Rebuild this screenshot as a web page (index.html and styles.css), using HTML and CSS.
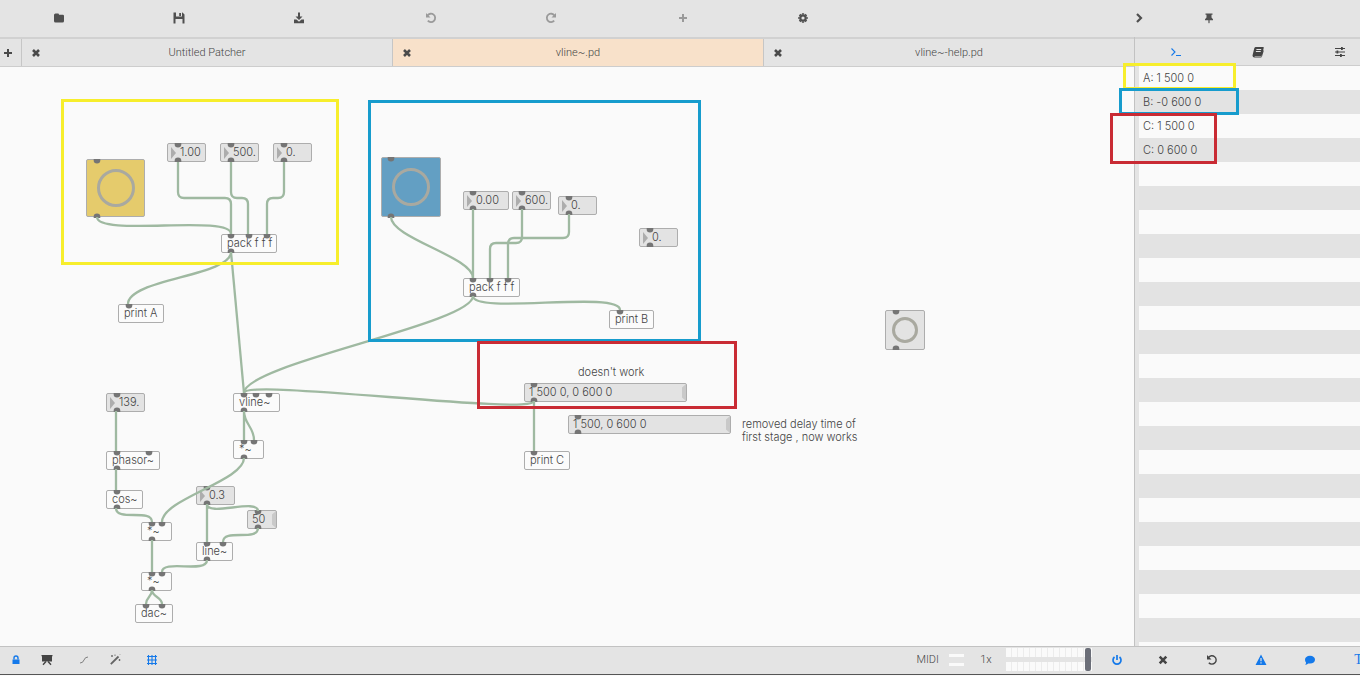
FILE: index.html
```html
<!DOCTYPE html>
<html lang="en">
<head>
<meta charset="utf-8">
<title>vline~.pd</title>
<link rel="stylesheet" href="styles.css">
</head>
<body>
<div class="app">
  <header class="toolbar">
    <div class="tool-group">
      <button class="tool" aria-label="Open"><svg viewBox="0 0 14 14"><path d="M2 4q0-1.500 1.500-1.500h2.500q1 0 1 1.200h3.800q1.200 0 1.200 1.200v5.100q0 1.500-1.500 1.500h-7q-1.500 0-1.500-1.500z"/></svg></button>
      <button class="tool" aria-label="Save"><svg viewBox="0 0 14 14"><path fill-rule="evenodd" d="M1.500 1.500h9l2 2v9h-11zM4 1.500v4h6v-4zM3.500 8v4.500h7V8z"/><path d="M7.200 2h1.800v3H7.200z"/></svg></button>
      <button class="tool" aria-label="Save as"><svg viewBox="0 0 14 14"><path d="M6 1.500h2v4h2.500L7 9 3.500 5.500H6z"/><path d="M2 8.500h2.500L7 10.800 9.500 8.500H12v3.700H2z"/></svg></button>
    </div>
    <div class="tool-group">
      <button class="tool" aria-label="Undo" disabled><svg viewBox="0 0 14 14"><path class="stroke" d="M3.500 4.500a4.200 4.200 0 1 1 .3 5.200"/><path d="M2 2v4.500h4.500z"/></svg></button>
      <button class="tool" aria-label="Redo" disabled><svg viewBox="0 0 14 14"><path class="stroke" d="M10.500 4.500a4.200 4.200 0 1 0-.3 5.200"/><path d="M12 2v4.500H7.500z"/></svg></button>
    </div>
    <div class="tool-group">
      <button class="tool" aria-label="Add object" disabled><svg viewBox="0 0 14 14"><path d="M6 3h2v3h3v2H8v3H6V8H3V6h3z"/></svg></button>
      <button class="tool" aria-label="Settings"><svg viewBox="0 0 14 14"><circle class="cog" cx="7" cy="7" r="2.700"/><path class="cog" d="M7 2.300v1.200M7 10.500v1.200M2.300 7h1.200M10.500 7h1.200M3.600 3.600l.9.900M9.500 9.500l.9.900M3.600 10.400l.9-.9M9.500 4.500l.9-.9"/></svg></button>
    </div>
    <div class="tool-group window-tools">
      <button class="tool narrow" aria-label="Hide sidebar"><svg viewBox="0 0 14 14"><path class="thick" d="M5 3l4 4-4 4"/></svg></button>
      <button class="tool narrow" aria-label="Pin sidebar"><svg viewBox="0 0 14 14"><path d="M3.500 2.500h7v1.300H9.500V6.500l1.500 1.700v1H7.600v2.500l-.6.800-.6-.8V9.200H3v-1L4.500 6.500V3.800h-1z"/></svg></button>
    </div>
  </header>

  <div class="workspace">
    <main class="editor">
      <nav class="tabs">
        <button class="new-tab" aria-label="New tab"><svg viewBox="0 0 14 14"><path d="M6 3h2v3h3v2H8v3H6V8H3V6h3z"/></svg></button>
        <div class="tab"><button class="close" aria-label="Close Untitled Patcher"><svg viewBox="0 0 14 14"><path class="cross" d="M4 4l6 6M10 4l-6 6"/></svg></button><button class="tab-name">Untitled Patcher</button></div>
        <div class="tab active"><button class="close" aria-label="Close vline~.pd"><svg viewBox="0 0 14 14"><path class="cross" d="M4 4l6 6M10 4l-6 6"/></svg></button><button class="tab-name">vline~.pd</button></div>
        <div class="tab"><button class="close" aria-label="Close vline~-help.pd"><svg viewBox="0 0 14 14"><path class="cross" d="M4 4l6 6M10 4l-6 6"/></svg></button><button class="tab-name">vline~-help.pd</button></div>
      </nav>

      <section class="canvas" aria-label="Patch">
        <button class="node bang bang-a" aria-label="Bang A"><span class="ring"></span></button>
        <label class="node number num-a1"><input aria-label="Level A" value="1.00"></label>
        <label class="node number num-a2"><input aria-label="Time A" value="500."></label>
        <label class="node number num-a3"><input aria-label="Delay A" value="0."></label>
        <div class="node object pack-a">pack f f f</div>
        <div class="node object print-a">print A</div>

        <button class="node bang bang-b" aria-label="Bang B"><span class="ring"></span></button>
        <label class="node number num-b1"><input aria-label="Level B" value="0.00"></label>
        <label class="node number num-b2"><input aria-label="Time B" value="600."></label>
        <label class="node number num-b3"><input aria-label="Delay B" value="0."></label>
        <label class="node number num-b4"><input aria-label="Spare number" value="0."></label>
        <div class="node object pack-b">pack f f f</div>
        <div class="node object print-b">print B</div>

        <label class="node number num-freq"><input aria-label="Frequency" value="139."></label>
        <div class="node object phasor">phasor~</div>
        <div class="node object cos">cos~</div>
        <div class="node object mul-1">*~</div>
        <div class="node object mul-2">*~</div>
        <div class="node object dac">dac~</div>
        <div class="node object vline">vline~</div>
        <div class="node object mul-3">*~</div>
        <label class="node number num-gain"><input aria-label="Gain" value="0.3"></label>
        <button class="node message msg-50">50</button>
        <div class="node object line">line~</div>

        <p class="comment comment-1">doesn't work</p>
        <button class="node message msg-1">1 500 0, 0 600 0</button>
        <button class="node message msg-2">1 500, 0 600 0</button>
        <p class="comment comment-2">removed delay time of<br>first stage , now works</p>
        <div class="node object print-c">print C</div>
        <button class="node bang bang-c" aria-label="Bang C"><span class="ring"></span></button>

        <svg class="wiring" aria-hidden="true">
          <defs>
            <path id="in" d="M-3.300 0h6.600v1.500a3.300 3 0 0 1-6.600 0z"/>
            <path id="out" d="M-3.300 0h6.600v-1.500a3.300 3 0 0 0-6.600 0z"/>
          </defs>
          <g transform="translate(0 -67)">
            <g class="ports">
              <use href="#in" x="97" y="159"/><use href="#out" x="97" y="218"/>
              <use href="#in" x="178" y="143"/><use href="#out" x="178" y="162"/>
              <use href="#in" x="231" y="143"/><use href="#out" x="231" y="162"/>
              <use href="#in" x="284" y="143"/><use href="#out" x="284" y="162"/>
              <use href="#in" x="231" y="234"/><use href="#in" x="249" y="234"/><use href="#in" x="267" y="234"/><use href="#out" x="231" y="253"/>
              <use href="#in" x="129" y="304"/>
              <use href="#in" x="391" y="157"/><use href="#out" x="391" y="218"/>
              <use href="#in" x="473" y="191"/><use href="#out" x="473" y="210"/>
              <use href="#in" x="522" y="191"/><use href="#out" x="522" y="210"/>
              <use href="#in" x="569" y="196"/><use href="#out" x="569" y="215"/>
              <use href="#in" x="650" y="228"/><use href="#out" x="650" y="247"/>
              <use href="#in" x="473" y="278"/><use href="#in" x="490" y="278"/><use href="#in" x="508" y="278"/><use href="#out" x="473" y="297"/>
              <use href="#in" x="620" y="310"/>
              <use href="#in" x="117" y="393"/><use href="#out" x="117" y="412"/>
              <use href="#in" x="117" y="451"/><use href="#in" x="149" y="451"/><use href="#out" x="117" y="470"/>
              <use href="#in" x="117" y="490"/><use href="#out" x="117" y="509"/>
              <use href="#in" x="152" y="522"/><use href="#in" x="162" y="522"/><use href="#out" x="152" y="541"/>
              <use href="#in" x="152" y="572"/><use href="#in" x="162" y="572"/><use href="#out" x="152" y="591"/>
              <use href="#in" x="146" y="604"/><use href="#in" x="162" y="604"/>
              <use href="#in" x="244" y="393"/><use href="#in" x="256" y="393"/><use href="#in" x="269" y="393"/><use href="#out" x="244" y="412"/>
              <use href="#in" x="244" y="440"/><use href="#in" x="254" y="440"/><use href="#out" x="244" y="459"/>
              <use href="#in" x="207" y="486"/><use href="#out" x="207" y="505"/>
              <use href="#in" x="258" y="510"/><use href="#out" x="258" y="529"/>
              <use href="#in" x="207" y="542"/><use href="#in" x="223" y="542"/><use href="#out" x="207" y="561"/>
              <use href="#in" x="534" y="383"/><use href="#out" x="534" y="402"/>
              <use href="#in" x="578" y="415"/><use href="#out" x="578" y="434"/>
              <use href="#in" x="534" y="451"/>
              <use href="#in" x="896" y="310"/><use href="#out" x="896" y="350"/>
            </g>
            <g class="cables">
              <path d="M178 162V192q0 6 6 6H225q6 0 6 6V234"/>
              <path d="M231 162V192q0 6 6 6H242q6 0 6 6V234"/>
              <path d="M284 162V192q0 6-6 6H273q-6 0-6 6V234"/>
              <path d="M97 217C97 237 231 214 231 234"/>
              <path d="M231 252C231 276 128 279 128 304"/>
              <path d="M231 252L244 393"/>
              <path d="M391 217C391 238 473 257 473 278"/>
              <path d="M473 209V278"/>
              <path d="M522 209V237q0 6-6 6H496q-6 0-6 6V278"/>
              <path d="M569 214V232q0 6-6 6H514q-6 0-6 6V278"/>
              <path d="M473 296C473 315 620 290 620 310"/>
              <path d="M473 296C473 324 244 364 244 393"/>
              <path d="M534 401C534 416 244 378 244 393"/>
              <path d="M534 401V451"/>
              <path d="M116 411V451M116 469V490"/>
              <path d="M116 508C116 522 152 508 152 522"/>
              <path d="M152 540V572"/>
              <path d="M152 590C152 597 146 597 146 604M152 590C152 597 162 597 162 604"/>
              <path d="M244 411V440M244 411C244 424 254 427 254 440"/>
              <path d="M244 458C244 481 162 499 162 522"/>
              <path d="M207 504V542M207 504C207 517 258 498 258 511"/>
              <path d="M258 528C258 542 223 528 223 542"/>
              <path d="M207 560C207 574 162 559 162 572"/>
            </g>
          </g>
        </svg>

        <div class="frame yellow frame-a"></div>
        <div class="frame blue frame-b"></div>
        <div class="frame red frame-c"></div>
      </section>
    </main>

    <aside class="sidebar">
      <nav class="side-tabs">
        <button class="side-tab on" aria-label="Console"><svg viewBox="0 0 14 14"><path class="thin" d="M2.500 3.500L6 7 2.500 10.500M7 10.500h5"/></svg></button>
        <button class="side-tab" aria-label="Documentation"><svg viewBox="0 0 14 14"><path fill-rule="evenodd" d="M4.500 2h7.700q.8 0 .5 1L11 10q-.3 1-1.200 1H3.500q0 .5 1 .5h6l1.800-6.500q.5.500.3 1.200L11 11.500q-.3 1-1.300 1H3.500Q1.500 12.500 1.500 10.500L3.200 3.500Q3.500 2 4.500 2zM5.500 4l-.2.900h4.800l.2-.9zM5 6l-.2.900h4.800l.2-.9z"/></svg></button>
        <button class="side-tab" aria-label="Parameters"><svg viewBox="0 0 14 14"><path class="thin" d="M2 3.500h10M2 7h10M2 10.500h10"/><path d="M8 2h1.800v3H8zM3.500 5.500h1.800v3H3.500zM7 9h1.800v3H7z"/></svg></button>
      </nav>
      <ul class="console">
        <li>A: 1 500 0</li>
        <li>B: -0 600 0</li>
        <li>C: 1 500 0</li>
        <li>C: 0 600 0</li>
      </ul>
      <div class="frame yellow log-a"></div>
      <div class="frame blue log-b"></div>
      <div class="frame red log-c"></div>
    </aside>
  </div>

  <footer class="statusbar">
    <div class="status-main">
      <div class="status-group">
        <button class="mini on" aria-label="Lock"><svg viewBox="0 0 14 14"><path d="M3.500 6.500h7V11h-7z"/><path class="mid" d="M5 6.500V5a2 2 0 0 1 4 0v1.500"/></svg></button>
        <button class="mini" aria-label="Presentation mode"><svg viewBox="0 0 14 14"><path d="M1.500 2h11v1.200H12V8.500H2V3.200h-.5z"/><path class="mid" d="M6 8.500L3 11.800M8 8.500l3 3.300"/></svg></button>
      </div>
      <div class="status-group">
        <button class="mini" aria-label="Connection style"><svg viewBox="0 0 14 14"><path class="faint" d="M3 10q3 0 4-3t4-3"/></svg></button>
        <button class="mini" aria-label="Auto patching"><svg viewBox="0 0 14 14"><path class="wand" d="M2.800 11.200L10.500 3.500"/><path class="faint" d="M4 2v2M3 3h2M7 1.500v1.500M11.500 6v2M10.500 7h2M12 1.500l-.5.500"/></svg></button>
      </div>
      <div class="status-group">
        <button class="mini on" aria-label="Grid"><svg viewBox="0 0 14 14"><path class="thin" d="M3.500 2v10M7 2v10M10.500 2v10M2 3.500h10M2 7h10M2 10.500h10"/></svg></button>
      </div>
      <div class="audio">
        <span>MIDI</span>
        <span class="midi-lights"><i></i><i></i></span>
        <button class="oversampling">1x</button>
        <div class="meter"><i></i><i></i><span class="handle"></span></div>
        <button class="mini on" aria-label="Audio power"><svg viewBox="0 0 14 14"><path class="power" d="M4.500 4a4 4 0 1 0 5 0M7 2v5"/></svg></button>
      </div>
    </div>
    <div class="status-side">
      <button class="side-tool" aria-label="Clear console"><svg viewBox="0 0 14 14"><path class="cross" d="M3.700 3.700l6.600 6.600M10.300 3.700l-6.600 6.600"/></svg></button>
      <button class="side-tool" aria-label="Restore"><svg viewBox="0 0 14 14"><path class="mid" d="M3.500 4.500a4.200 4.200 0 1 1 .3 5.200"/><path d="M2 2v4.500h4.500z"/></svg></button>
      <button class="side-tool on" aria-label="Show errors"><svg viewBox="0 0 14 14"><path fill-rule="evenodd" d="M7 1.500L12.500 12h-11zM6.400 5v3.300h1.200V5zM6.400 9.200v1.200h1.200V9.200z"/></svg></button>
      <button class="side-tool on" aria-label="Show messages"><svg viewBox="0 0 14 14"><path d="M7 2.800c3 0 5 1.700 5 3.900s-2 3.900-5 3.900q-.9 0-1.800-.2Q4 11.800 2.200 11.800 3.300 10.500 3 9.500 2 8.300 2 6.700c0-2.200 2-3.900 5-3.900z"/></svg></button>
      <button class="side-tool letter on" aria-label="Text size">T</button>
    </div>
  </footer>
</div>
</body>
</html>
```
FILE: styles.css
```css
* { box-sizing: border-box; }

body {
  margin: 0;
  background: #fafafa;
  color: #444;
  font: 300 11px/16px Inter, "Liberation Sans", sans-serif;
}

button, input {
  margin: 0;
  padding: 0;
  border: 0;
  background: none;
  color: inherit;
  font: inherit;
}

svg { fill: currentColor; }

button svg {
  display: block;
  width: 14px;
  height: 14px;
}

.stroke, .thick, .thin, .mid, .faint, .cross, .wand, .power, .cog {
  fill: none;
  stroke: currentColor;
}
.stroke { stroke-width: 1.8; }
.thick { stroke-width: 2.2; }
.thin { stroke-width: 1.1; }
.mid { stroke-width: 1.4; }
.faint { stroke-width: 0.9; opacity: 0.7; }
.cross { stroke-width: 2.6; }
.wand { stroke-width: 1.8; opacity: 0.8; }
.power { stroke-width: 1.7; }
.cog { stroke-width: 2.2; }

.app {
  display: flex;
  flex-direction: column;
  height: calc(100vh - 1px);
  border-bottom: 1px solid #555;
  overflow: hidden;
}

/* toolbar */
.toolbar {
  display: flex;
  gap: 14px;
  height: 37px;
  flex: none;
  padding-bottom: 1px;
  background: #e4e4e4;
}
.tool-group { display: flex; gap: 2px; }
.window-tools { margin-left: auto; padding-right: 117px; }
.tool {
  display: grid;
  place-items: center;
  width: 118px;
  color: #4f4f4f;
}
.tool.narrow { width: 68px; }
.tool:disabled { color: #9a9a9a; }

/* workspace */
.workspace { display: flex; flex: 1; min-height: 0; }
.editor { display: flex; flex-direction: column; flex: 1; min-width: 0; }

.tabs, .side-tabs {
  display: flex;
  height: 30px;
  flex: none;
  border-top: 2px solid #d1d1d1;
  border-bottom: 1px solid #cdcdcd;
  background: #e4e4e4;
  font: 300 11px/16px Roboto, "Liberation Sans", sans-serif;
}
.new-tab {
  display: grid;
  place-items: center;
  width: 21px;
  padding-right: 5px;
}
.new-tab, .close { color: #4a4a4a; }
.tab {
  display: grid;
  grid-template-columns: 28px 1fr 28px;
  flex: 1;
  border-left: 1px solid #c6c6c6;
}
.tab.active { background: #f8e1ca; }
.close { display: grid; place-items: center; }

.canvas {
  position: relative;
  flex: 1;
  background: #fafafa;
  overflow: hidden;
}

/* patch objects */
.node {
  position: absolute;
  height: 19px;
  border: 1px solid #adadad;
  border-radius: 2px;
  line-height: 17px;
  white-space: nowrap;
}
.object { padding-left: 5px; background: #fbfbfb; }
.number { width: 39px; padding-left: 12px; background: #e3e3e3; }
.number::before {
  content: "";
  position: absolute;
  left: 3px;
  top: 3px;
  border: solid transparent;
  border-width: 6px 0 6px 5px;
  border-left-color: #adadad;
}
.number input { display: block; width: 100%; height: 17px; outline: 0; }
.message { padding-left: 4px; background: #e3e3e3; text-align: left; overflow: hidden; }
.message::after {
  content: "";
  position: absolute;
  right: 0;
  top: 0;
  width: 4px;
  height: 17px;
  background: #c9c9c9;
  clip-path: polygon(100% 0, 0 20%, 0 80%, 100% 100%);
}
.bang { display: grid; place-items: center; background: #e3e3e3; }
.ring {
  width: 38px;
  height: 38px;
  border: 3px solid #a9a9a0;
  border-radius: 50%;
}
.comment { position: absolute; margin: 0; line-height: 13px; white-space: nowrap; }

.bang-a { left: 86px; top: 92px; width: 59px; height: 58px; background: #e5cb6c; }
.num-a1 { left: 167px; top: 76px; }
.num-a2 { left: 220px; top: 76px; }
.num-a3 { left: 273px; top: 76px; }
.pack-a { left: 221px; top: 167px; width: 56px; }
.print-a { left: 118px; top: 237px; width: 46px; }
.bang-b { left: 381px; top: 90px; width: 60px; height: 60px; background: #639fc3; }
.num-b1 { left: 463px; top: 124px; width: 46px; }
.num-b2 { left: 512px; top: 124px; }
.num-b3 { left: 558px; top: 129px; }
.num-b4 { left: 639px; top: 161px; }
.pack-b { left: 463px; top: 211px; width: 57px; }
.print-b { left: 609px; top: 243px; width: 45px; }
.num-freq { left: 106px; top: 326px; }
.phasor { left: 106px; top: 384px; width: 54px; }
.cos { left: 106px; top: 423px; width: 37px; }
.mul-1 { left: 141px; top: 455px; width: 31px; }
.mul-2 { left: 141px; top: 505px; width: 31px; }
.dac { left: 135px; top: 537px; width: 38px; }
.vline { left: 233px; top: 326px; width: 47px; }
.mul-3 { left: 233px; top: 373px; width: 31px; }
.num-gain { left: 196px; top: 419px; }
.msg-50 { left: 247px; top: 443px; width: 30px; }
.line { left: 196px; top: 475px; width: 37px; }
.msg-1 { left: 524px; top: 316px; width: 163px; }
.msg-2 { left: 568px; top: 348px; width: 163px; }
.print-c { left: 524px; top: 384px; width: 46px; }
.bang-c { left: 885px; top: 243px; width: 40px; height: 40px; }
.bang-c .ring { width: 26px; height: 26px; }
.comment-1 { left: 578px; top: 299px; }
.comment-2 { left: 742px; top: 351px; }

.wiring {
  position: absolute;
  inset: 0;
  width: 100%;
  height: 100%;
  pointer-events: none;
}
.ports { fill: #757575; }
.cables { fill: none; stroke: #9fb9a1; stroke-width: 2.3; }

/* highlight frames */
.frame { position: absolute; border: 3px solid; pointer-events: none; }
.yellow { border-color: #f7ee2c; }
.blue { border-color: #179ccd; }
.red { border-color: #c92b34; }
.frame-a { left: 61px; top: 32px; width: 278px; height: 166px; }
.frame-b { left: 368px; top: 33px; width: 333px; height: 242px; }
.frame-c { left: 477px; top: 274px; width: 260px; height: 68px; }
.log-a { left: -12px; top: 26px; width: 113px; height: 27px; }
.log-b { left: -16px; top: 51px; width: 120px; height: 27px; }
.log-c { left: -25px; top: 76px; width: 107px; height: 51px; }

/* sidebar */
.sidebar {
  position: relative;
  display: flex;
  flex-direction: column;
  flex: none;
  width: 226px;
  border-left: 1px solid #c2c2c2;
  background: #e4e4e4;
}
.side-tabs { height: 29px; overflow: hidden; }
.side-tab { display: grid; place-items: center; flex: none; width: 82px; }
.on { color: #1479ea; }
.console {
  flex: 1;
  margin: 0 0 0 4px;
  padding: 0;
  list-style: none;
  background: repeating-linear-gradient(#fafafa 0 24px, #e3e3e3 24px 48px);
}
.console li { height: 24px; padding-left: 4px; line-height: 24px; }

/* status bar */
.statusbar {
  display: flex;
  flex: none;
  height: 28px;
  padding-bottom: 2px;
  border-top: 1px solid #c2c2c2;
  background: #e4e4e4;
}
.status-main { display: flex; flex: 1; gap: 7px; padding: 0 6px 0 1px; }
.status-group { display: flex; gap: 1px; }
.mini { display: grid; place-items: center; width: 30px; }
.audio {
  display: flex;
  align-items: center;
  margin-left: auto;
  font: 300 11px/16px Roboto, "Liberation Sans", sans-serif;
}
.midi-lights { display: grid; gap: 6px; width: 15px; margin: 0 12px 0 10px; }
.midi-lights i { height: 3px; background: #fafafa; }
.oversampling { width: 20px; margin-right: 10px; }
.meter { position: relative; display: grid; gap: 5px; width: 86px; margin-right: 10px; }
.meter i { height: 9px; background: repeating-linear-gradient(90deg, #fafafa 0 5px, #ececec 5px 6px); }
.handle {
  position: absolute;
  top: 0;
  right: 1px;
  width: 6px;
  height: 23px;
  border-radius: 2px;
  background: #6b6e78;
}
.status-side { display: flex; flex: none; width: 222px; overflow: hidden; }
.side-tool { display: grid; place-items: center; flex: none; width: 49px; }
.letter { font: 14px/16px "Liberation Serif", serif; }
```
